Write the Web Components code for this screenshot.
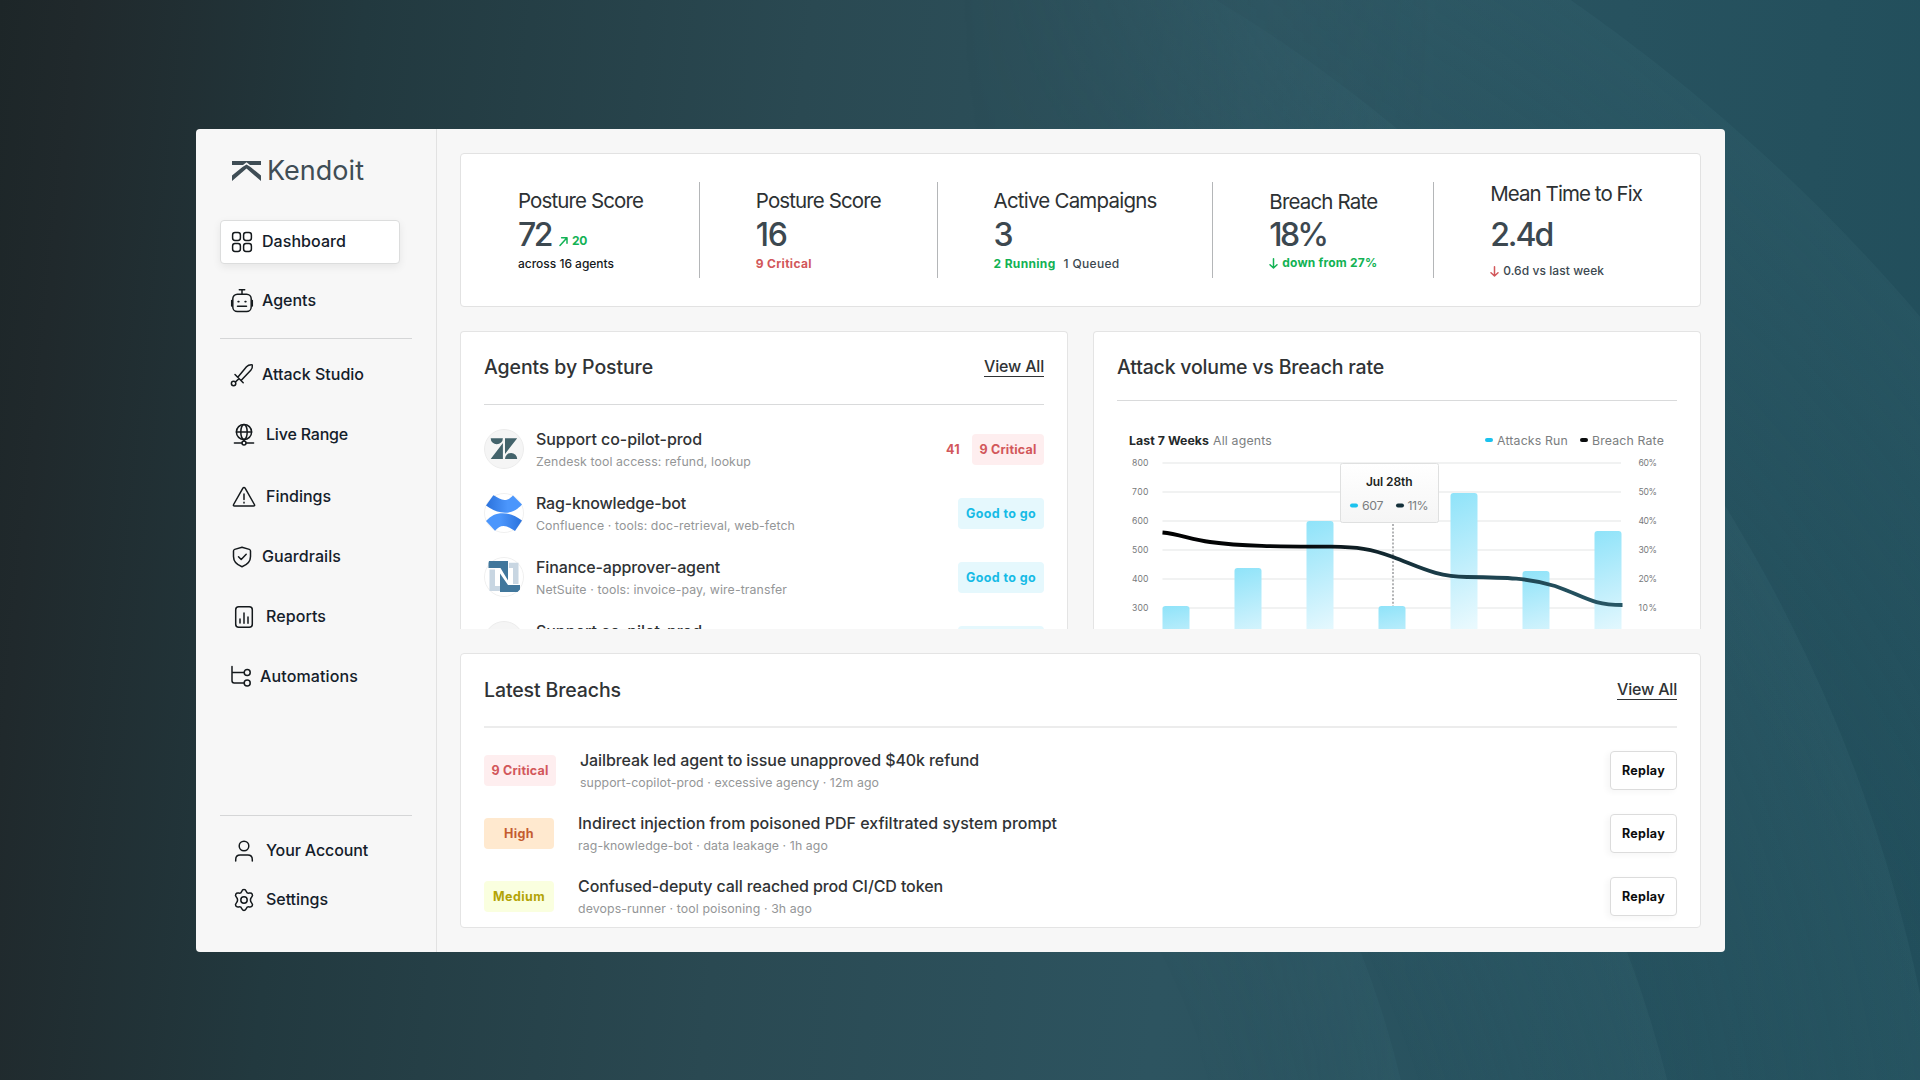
<!DOCTYPE html>
<html lang="en">
<head>
<meta charset="utf-8">
<title>Kendoit</title>
<style>
  * { box-sizing: border-box; }
  html, body { margin: 0; height: 100%; overflow: hidden; }
  body { font-family: Inter, "Liberation Sans", sans-serif; color: #2b2f31; }
</style>
</head>
<body>
<kendoit-app></kendoit-app>

<script>
/* eslint-env browser */

const define = (name, render, setup) => {
  customElements.define(name, class extends HTMLElement {
    constructor () {
      super()
      this.attachShadow({ mode: 'open' })
    }

    connectedCallback () {
      this.shadowRoot.innerHTML = '<style>* { box-sizing: border-box; }</style>' + render(this)
      if (setup) setup(this)
    }
  })
}

const ICONS = {
  grid: '<rect x="2.6" y="2.6" width="7.8" height="7.8" rx="2.4"/><rect x="13.6" y="2.6" width="7.8" height="7.8" rx="2.4"/><rect x="2.6" y="13.6" width="7.8" height="7.8" rx="2.4"/><rect x="13.6" y="13.6" width="7.8" height="7.8" rx="2.4"/>',
  robot: '<rect x="2.8" y="5.2" width="18.4" height="17.3" rx="4.6"/><path d="M12 5V.8M9.3 .8h5.4M1.7 11.5v5.5M22.3 11.5v5.5M7.5 17.2h9"/><path d="M8.2 12.6h.6M15.2 12.6h.6" stroke-width="1.8"/>',
  sword: '<path d="M8 14L16.5 3.8C18 2.2 20 1.7 22.3 1.9c.3 2 0 3.8-1.5 5.4L11.3 17.2M5 11.5l8.2 8.2M9 15.6l-3.6 3.4"/><circle cx="3.6" cy="20.5" r="2.2"/>',
  globe: '<circle cx="12" cy="9" r="7.6"/><ellipse cx="12" cy="9" rx="3.2" ry="7.6"/><path d="M4.4 9h15.2M12 16.6v1.6M2.4 20h7.6M14 20h7.6"/><circle cx="12" cy="20" r="2"/>',
  warn: '<path d="M12 2.5c.5 0 .8.2 1.1.7l9.3 16.3c.5.9.1 1.5-.9 1.5h-19c-1 0-1.400-.6-.9-1.500L10.900 3.200c.3-.5.6-.7 1.100-.7z"/><path d="M12 9v5.500M12 17.300v.6"/>',
  shield: '<path d="M12 2.3l7.300 2.100c.8.3 1.200.8 1.200 1.600v5.500c0 4.900-3.300 8.300-8.500 10.200C6.800 19.800 3.500 16.400 3.500 11.500V6c0-.8.4-1.300 1.200-1.600z"/><path d="M8.500 11.800l2.700 2.700 5-5.200"/>',
  report: '<rect x="3.7" y="1.7" width="16.6" height="20.6" rx="3"/><path d="M8 14v4M12 8v10.200M16 12v6.200"/>',
  flow: '<path d="M3 1.500v14.200c0 1.600.6 2.200 2.200 2.200h9.500M3 7.500h11.700"/><circle cx="18.200" cy="7.500" r="3"/><circle cx="18.200" cy="18" r="3"/>',
  user: '<circle cx="12" cy="7" r="4.8"/><path d="M3.700 22v-1.500c0-3 1.600-4.500 4.500-4.500h7.600c2.900 0 4.500 1.500 4.500 4.500V22"/>',
  gear: '<circle cx="12" cy="12" r="3.200"/><path d="M9.700 3.400C10.200 2 10.900 1.600 12 1.600s1.800.4 2.300 1.800c.5 1.400 1.600 2 3 1.700 1.500-.3 2.300 0 2.900 1 .6 1 .5 1.800-.5 2.900-1.700 2-1.700 4 0 6 1 1.100 1.100 1.900.5 2.900-.6 1-1.400 1.300-2.900 1-1.400-.3-2.500.3-3 1.700-.5 1.400-1.200 1.800-2.300 1.800s-1.800-.4-2.300-1.800c-.5-1.400-1.600-2-3-1.700-1.500.3-2.300 0-2.900-1-.6-1-.5-1.800.5-2.900 1.700-2 1.700-4 0-6-1-1.100-1.100-1.900-.5-2.900.6-1 1.400-1.300 2.900-1 1.400.3 2.500-.3 3-1.700z"/>'
}

const LOGOS = {
  zendesk: '<circle cx="20" cy="20" r="19.5" fill="#f5f5f5" stroke="#ececec"/><path d="M6.700 9.200h12.200a6.100 6.100 0 0 1-12.200 0zM18.900 14v16H6.700zM21 9.200h12.200L21 25zM21 30a6.100 6.100 0 0 1 12.200 0z" fill="#43636b"/>',
  confluence: '<defs><linearGradient id="a" x1="0" x2="1"><stop stop-color="#2b72dc"/><stop offset=".6" stop-color="#4b96fc"/></linearGradient><linearGradient id="b" x1="0" x2="1"><stop offset=".4" stop-color="#4b96fc"/><stop offset="1" stop-color="#2b72dc"/></linearGradient></defs><circle cx="20" cy="20" r="19.5" fill="#fff" stroke="#f0f0f0"/><path d="M2 12.500L9.300 2.300C14 4.500 17 7 20.500 7c3.500 0 5.500-1.500 8.500-4.500L38 11.500C33 17 28 19.700 21 19.700c-7 0-13-3-19-7.200z" fill="url(#a)"/><path d="M2 28C7 22.500 12 20.200 18.500 20.200c7 0 13.500 3 19.500 7.300L31 38c-4.500-2.600-7.500-5-11.500-5-3.500 0-5.500 1.700-8.500 4.700z" fill="url(#b)"/>',
  netsuite: '<circle cx="20" cy="20" r="19.5" fill="#fff" stroke="#f0f0f0"/><path d="M5.500 12.500H11V29h5v5H5.500zM25 5.800h9.500V27H29V11h-4z" fill="#c8d6e2"/><path d="M5 4h19v19.500L16.500 11H4.500V6zM16 16.500L24 28h12v4.500L33.500 35H16z" fill="#41779c"/>',
  blank: '<circle cx="20" cy="20" r="19.5" fill="#f5f5f5" stroke="#ececec"/>'
}

const arrow = (dir, color) => `<svg width="9" height="11" viewBox="0 0 9 11" fill="none" stroke="${color}" stroke-width="1.5" stroke-linecap="round" stroke-linejoin="round"><path d="${dir === 'up' ? 'M1 9.5L7.800 2M2.600 1.800h5.400v5.400' : 'M4.500 .8v9M1 6.800l3.500 3.200 3.500-3.200'}"/></svg>`

define('kendoit-app', () => `
  <style>
    :host {
      position: relative;
      display: flex;
      height: 1080px;
      padding: 129px 195px 128px 196px;
      background: linear-gradient(96deg, #1d2628 0%, #20292c 4%, #22393f 18%, #2a4952 40%, #2d5460 62%, #27525f 80%, #214e5b 100%);
    }
    .arcs { position: absolute; inset: 0; }
    .window { position: relative; flex: 1; display: flex; background: #f7f7f7; border-radius: 4px; overflow: hidden; }
    main { flex: 1; display: flex; flex-direction: column; gap: 24px; padding: 24px 24px 0 23px; min-width: 0; }
    .pair { display: flex; gap: 25px; height: 298px; }
    .pair > * { flex: 1; min-width: 0; }
  </style>
  <svg class="arcs" width="1920" height="1080">
    <defs>
      <radialGradient id="glow"><stop offset=".8" stop-color="#3a6a76" stop-opacity="0"/><stop offset="1" stop-color="#3a6a76" stop-opacity=".22"/></radialGradient>
      <linearGradient id="fade"><stop offset=".5" stop-color="#000"/><stop offset=".75" stop-color="#fff"/></linearGradient>
      <mask id="right"><rect width="1920" height="1080" fill="url(#fade)"/></mask>
    </defs>
    <g fill="url(#glow)" mask="url(#right)">
      <circle cx="516" cy="1515" r="1846"/>
      <circle cx="420" cy="1310" r="1533"/>
      <circle cx="497" cy="1376" r="1207"/>
      <circle cx="487" cy="1296" r="939"/>
    </g>
  </svg>
  <div class="window">
    <side-nav></side-nav>
    <main>
      <stat-bar></stat-bar>
      <div class="pair">
        <agents-card></agents-card>
        <volume-card></volume-card>
      </div>
      <breaches-card></breaches-card>
    </main>
  </div>
`)

define('side-nav', () => `
  <style>
    :host { display: flex; flex-direction: column; width: 241px; padding: 25px 24px 30px 24px; border-right: 1px solid #e2e2e2; }
    .brand { display: flex; align-items: center; gap: 6px; height: 32px; padding-left: 12px; margin-bottom: 34px; color: #3f4d55; font-size: 27px; }
    .brand svg { margin-top: 2px; }
    hr { width: 100%; height: 1px; margin: 15px 0 14px; border: 0; background: #d5d6d7; }
    .group { display: flex; flex-direction: column; gap: 16px; }
    .top { gap: 15px; }
    .bottom { gap: 5px; margin-top: auto; }
    .bottom hr { margin: 0 0 8px; }
  </style>
  <div class="brand">
    <svg width="29" height="20" viewBox="0 0 29 20" fill="#3f4d55"><path d="M0 0h29v4H18L14.500 1.200 11 4H0zM10.500 6l4-2.600 4 2.600L29 14.500V20L14.500 7.500 0 20v-5.500z"/></svg>
    <fit-text w="97">Kendoit</fit-text>
  </div>
  <div class="group top">
    <nav-item icon="grid" w="84" active>Dashboard</nav-item>
    <nav-item icon="robot" w="54">Agents</nav-item>
  </div>
  <hr>
  <div class="group">
    <nav-item icon="sword" w="102">Attack Studio</nav-item>
    <nav-item icon="globe" w="82" wide>Live Range</nav-item>
    <nav-item icon="warn" w="65" wide style="margin-top:2px">Findings</nav-item>
    <nav-item icon="shield" w="79">Guardrails</nav-item>
    <nav-item icon="report" w="60" wide>Reports</nav-item>
    <nav-item icon="flow" w="98" style="--inset:9px;--gap:7px">Automations</nav-item>
  </div>
  <div class="group bottom">
    <hr>
    <nav-item icon="user" w="102" wide>Your Account</nav-item>
    <nav-item icon="gear" w="62" wide>Settings</nav-item>
  </div>
`)

define('nav-item', el => `
  <style>
    :host { display: flex; align-items: center; gap: var(--gap, 8px); width: 180px; height: 44px; padding: 0 0 1px var(--inset, 10px); font-size: 16px; font-weight: 500; color: #14202a; }
    :host([wide]) { --inset: 12px; --gap: 10px; }
    :host([active]) { --inset: 9px; background: #fff; border: 1px solid #dcdddd; border-radius: 4px; box-shadow: 0 3px 8px rgba(0, 0, 0, .07); }
    svg { flex: none; }
    fit-text { margin-bottom: 2px; }
  </style>
  <svg width="24" height="24" viewBox="0 0 24 24" fill="none" stroke="#14191c" stroke-width="1.5" stroke-linecap="round" stroke-linejoin="round">${ICONS[el.getAttribute('icon')]}</svg>
  <fit-text w="${el.getAttribute('w')}"><slot></slot></fit-text>
`)

define('stat-bar', () => `
  <style>
    :host { display: flex; align-items: center; gap: 55.9px; height: 154px; padding-left: 57px; background: #fff; border: 1px solid #e2e2e2; border-radius: 4px; }
    i { width: 1px; height: 96px; background: #b4b6b8; }
    .ok { color: #12b254; font-weight: 700; }
    .bad { color: #d2575a; font-weight: 700; }
    .row { display: flex; align-items: center; }
  </style>
  <stat-item label="Posture Score" w="125" value="72" vw="33">
    <span slot="delta" class="ok row" style="gap:4px">${arrow('up', '#12b254')}<fit-text w="15">20</fit-text></span>
    <fit-text w="96" style="color:#15191b">across 16 agents</fit-text>
  </stat-item>
  <i></i>
  <stat-item label="Posture Score" w="125" value="16" vw="31">
    <fit-text w="56" class="bad">9 Critical</fit-text>
  </stat-item>
  <i></i>
  <stat-item label="Active Campaigns" w="163" value="3" vw="18">
    <span class="row" style="gap:8px"><fit-text w="62" class="ok">2 Running</fit-text><fit-text w="56">1 Queued</fit-text></span>
  </stat-item>
  <i></i>
  <stat-item label="Breach Rate" w="108" value="18%" vw="57" style="--gap:2px">
    <span class="ok row" style="gap:4px">${arrow('down', '#12b254')}<fit-text w="95">down from 27%</fit-text></span>
  </stat-item>
  <i></i>
  <stat-item label="Mean Time to Fix" w="152" value="2.4d" vw="62" style="--gap:10px">
    <span class="row" style="gap:4px">${arrow('down', '#d2575a')}<fit-text w="101">0.6d vs last week</fit-text></span>
  </stat-item>
`)

define('stat-item', el => `
  <style>
    :host { display: flex; flex-direction: column; align-items: flex-start; gap: var(--gap, 3px); color: #3c4850; }
    .label { height: 26px; line-height: 26px; font-size: 20.5px; color: #2d3133; }
    .value { display: flex; height: 36px; line-height: 36px; font-size: 32px; font-weight: 500; gap: 8px; }
    .delta { display: block; font-size: 12px; padding-top: 12px; line-height: 24px; }
    .note { height: 16px; line-height: 16px; font-size: 12px; font-weight: 500; }
  </style>
  <div class="label"><fit-text w="${el.getAttribute('w')}">${el.getAttribute('label')}</fit-text></div>
  <div class="value"><fit-text w="${el.getAttribute('vw')}">${el.getAttribute('value')}</fit-text><span class="delta"><slot name="delta"></slot></span></div>
  <div class="note"><slot></slot></div>
`)

// Card frame with a heading, an optional "View All" link and a rule below it
define('panel-card', el => `
  <style>
    :host { display: flex; flex-direction: column; height: 100%; padding: 0 23px; background: #fff; border: 1px solid #e4e4e4; border-radius: 4px; overflow: hidden; }
    :host([cut]) { border-bottom: 0; border-radius: 4px 4px 0 0; }
    header { flex: none; display: flex; justify-content: space-between; align-items: center; height: var(--head, 72px); padding: var(--drop, 0) 0 var(--lift, 0); border-bottom: var(--rule, 1px solid #d9dadb); }
    h2 { margin: 0; font-size: 19.5px; font-weight: 500; line-height: 26px; color: #303335; }
    a { font-size: 16px; font-weight: 500; line-height: 19px; border-bottom: 1px solid #303335; color: #303335; }
  </style>
  <header>
    <h2><fit-text w="${el.getAttribute('w')}">${el.getAttribute('heading')}</fit-text></h2>
    ${el.hasAttribute('link') ? '<a><fit-text w="60">View All</fit-text></a>' : ''}
  </header>
  <slot></slot>
`)

define('status-badge', el => `
  <style>
    :host { flex: none; display: flex; align-items: center; justify-content: center; height: 31px; border-radius: 4px; font-size: 12.5px; font-weight: 700; }
    :host([tone=critical]) { width: 72px; background: #feeeef; color: #d2575a; }
    :host([tone=good]) { width: 86px; background: #e5f8fd; color: #16bbe6; }
    :host([tone=high]) { width: 70px; background: #ffe9cf; color: #c45c30; }
    :host([tone=medium]) { width: 70px; background: #faffdf; color: #b3a406; }
  </style>
  <fit-text w="${el.getAttribute('w')}"><slot></slot></fit-text>
`)

define('entry-row', el => `
  <style>
    :host { flex: none; display: flex; align-items: center; height: var(--row, 64px); }
    .text { flex: 1; display: flex; flex-direction: column; margin-top: 2px; padding-left: var(--indent, 12px); }
    .title { font-size: 16px; font-weight: 500; line-height: 22px; color: #303335; }
    .sub { font-size: 12.3px; line-height: 23px; color: #949697; }
    .end { display: flex; align-items: center; gap: 12px; }
  </style>
  <slot name="lead"></slot>
  <div class="text">
    <fit-text class="title" w="${el.getAttribute('tw')}">${el.getAttribute('title-text')}</fit-text>
    <fit-text class="sub" w="${el.getAttribute('sw')}">${el.getAttribute('sub')}</fit-text>
  </div>
  <div class="end"><slot></slot></div>
`)

const AGENTS = [
  ['zendesk', 'Support co-pilot-prod', 166, 'Zendesk tool access: refund, lookup', 215, true],
  ['confluence', 'Rag-knowledge-bot', 150, 'Confluence · tools: doc-retrieval, web-fetch', 259],
  ['netsuite', 'Finance-approver-agent', 184, 'NetSuite · tools: invoice-pay, wire-transfer', 251],
  ['blank', 'Support co-pilot-prod', 166, 'Zendesk tool access: refund, lookup', 215]
]

define('agents-card', () => `
  <style>
    :host { display: block; height: 298px; }
    .list { padding-top: 12px; }
    .score { font-size: 12.5px; font-weight: 700; color: #d2575a; }
  </style>
  <panel-card cut link heading="Agents by Posture" w="169" style="--head:73px;--lift:2px">
    <div class="list">
      ${AGENTS.map(([logo, title, tw, sub, sw, critical]) => `
        <entry-row title-text="${title}" tw="${tw}" sub="${sub}" sw="${sw}">
          <svg slot="lead" width="40" height="40">${LOGOS[logo]}</svg>
          ${critical
            ? '<fit-text class="score" w="14">41</fit-text><status-badge tone="critical" w="57">9 Critical</status-badge>'
            : '<status-badge tone="good" w="70">Good to go</status-badge>'}
        </entry-row>`).join('')}
    </div>
  </panel-card>
`)

const BREACHES = [
  ['critical', '9 Critical', 57, 'Jailbreak led agent to issue unapproved $40k refund', 399, 'support-copilot-prod · excessive agency · 12m ago', 299],
  ['high', 'High', 30, 'Indirect injection from poisoned PDF exfiltrated system prompt', 479, 'rag-knowledge-bot · data leakage · 1h ago', 250],
  ['medium', 'Medium', 52, 'Confused-deputy call reached prod CI/CD token', 365, 'devops-runner · tool poisoning · 3h ago', 234]
]

define('breaches-card', () => `
  <style>
    :host { display: block; height: 275px; --row: 63px; --indent: 24px; }
    .list { padding-top: 11px; }
    button { width: 67px; height: 39px; padding: 0; background: #fff; border: 1px solid #dcdcdc; border-radius: 4px; box-shadow: -3px 2px 6px rgba(0, 0, 0, .04); font: 700 12.5px Inter, sans-serif; color: #0c0e0f; }
  </style>
  <panel-card link heading="Latest Breachs" w="137" style="--head:74px;--rule:2px solid #ececec">
    <div class="list">
      ${BREACHES.map(([tone, label, lw, title, tw, sub, sw]) => `
        <entry-row title-text="${title}" tw="${tw}" sub="${sub}" sw="${sw}">
          <status-badge slot="lead" tone="${tone}" w="${lw}">${label}</status-badge>
          <button><fit-text w="43">Replay</fit-text></button>
        </entry-row>`).join('')}
    </div>
  </panel-card>
`)

// Top edge of each weekly bar, in chart pixels
const BAR_TOPS = [151, 113, 66, 151, 38, 116, 76]

define('volume-card', () => `
  <style>
    :host { display: block; height: 298px; }
    .legend { flex: none; display: flex; align-items: center; height: 20px; margin-top: 29px; padding: 0 13px 0 12px; font-size: 12.3px; color: #7b7e80; }
    .legend b { margin-right: 4px; color: #24282a; }
    .legend i { width: 8px; height: 4px; margin: 0 4px 0 12px; border-radius: 2px; background: #1bc2ee; }
    .legend i.dark { background: #0b0d0e; }
    .legend .push { margin-left: auto; }
    svg { display: block; flex: none; margin-top: 5px; font-family: Inter, sans-serif; }
  </style>
  <panel-card cut heading="Attack volume vs Breach rate" w="267" style="--head:69px;--drop:2px">
    <div class="legend">
      <b><fit-text w="80">Last 7 Weeks</fit-text></b><fit-text w="59">All agents</fit-text>
      <i class="push"></i><fit-text w="71">Attacks Run</fit-text>
      <i class="dark"></i><fit-text w="72">Breach Rate</fit-text>
    </div>
    <svg width="560" height="175" viewBox="0 0 560 175">
      <defs>
        <linearGradient id="bar" x2=".06" y2="1"><stop stop-color="#8fe3f9"/><stop offset=".4" stop-color="#c2effc"/><stop offset=".7" stop-color="#e8f9fe"/><stop offset="1" stop-color="#fff"/></linearGradient>
        <linearGradient id="trend"><stop stop-color="#000"/><stop offset=".3" stop-color="#06090b"/><stop offset=".6" stop-color="#1a3c48"/><stop offset="1" stop-color="#275766"/></linearGradient>
        <linearGradient id="tip" x2="0" y2="1"><stop stop-color="#fff"/><stop offset="1" stop-color="#f5f5f5"/></linearGradient>
      </defs>
      ${[800, 700, 600, 500, 400, 300].map((n, i) => `
        <path d="M45.500 ${8 + i * 29}H504" stroke="#f1f2f2" stroke-width="2"/>
        <text x="15" y="${11.2 + i * 29}" font-size="8.6" textLength="16.5" fill="#77797b">${n}</text>
        <text x="521.5" y="${11.2 + i * 29}" font-size="8.6" textLength="18.5" fill="#77797b">${60 - i * 10}%</text>`).join('')}
      ${BAR_TOPS.map((y, i) => `<rect x="${45.5 + i * 72}" y="${y}" width="27" height="${240 - y}" rx="3" fill="url(#bar)"/>`).join('')}
      <path d="M276 69v82" stroke="#9a9c9e" stroke-width="1.5" stroke-dasharray="2 1.7"/>
      <path d="M45.500 77.500C62 79 74 84.500 93 87C125 91.500 165 91.500 214 91.700C240 92 254 93.500 276 102C305 113 319 121.500 350 122C390 122.500 412 123 438 131C467 141 474 150 505.500 150" fill="none" stroke="url(#trend)" stroke-width="3.8"/>
      <rect x="223.5" y="8.5" width="98" height="59" rx="2" fill="url(#tip)" stroke="#dfe0e0"/>
      <text x="249" y="30.5" font-size="12" font-weight="600" textLength="46.5" fill="#1b1f21">Jul 28th</text>
      <rect x="233" y="48.5" width="8" height="4" rx="2" fill="#1bc2ee"/>
      <text x="245" y="55" font-size="12.3" textLength="21.5" fill="#7b7e80">607</text>
      <rect x="279" y="48.5" width="8" height="4" rx="2" fill="#14303a"/>
      <text x="290.5" y="55" font-size="12.3" textLength="21" fill="#7b7e80">11%</text>
    </svg>
  </panel-card>
`)

// Tracks its text in or out so that the line is exactly w pixels wide.
// Defined last, when every font rule above it already applies.
define('fit-text', () => `
  <style>
    :host { display: inline-block; white-space: nowrap; }
    span { display: inline-block; }
  </style>
  <span><slot></slot></span>
`, el => {
  const span = el.shadowRoot.querySelector('span')
  const w = Number(el.getAttribute('w'))
  const inner = el.querySelector('slot')
  const text = inner ? inner.assignedNodes().map(n => n.textContent).join('') : el.textContent
  el.style.width = w + 'px'
  span.style.letterSpacing = (w - span.getBoundingClientRect().width) / text.trim().length + 'px'
})
</script>
</body>
</html>
